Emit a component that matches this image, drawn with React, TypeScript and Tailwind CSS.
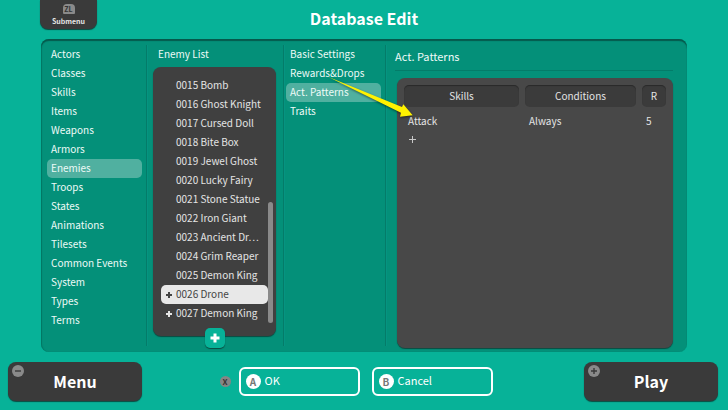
import React, { useState } from "react";

const sections = [
  "Actors", "Classes", "Skills", "Items", "Weapons", "Armors", "Enemies", "Troops",
  "States", "Animations", "Tilesets", "Common Events", "System", "Types", "Terms",
];

const enemies = [
  { id: "0015", name: "Bomb" },
  { id: "0016", name: "Ghost Knight" },
  { id: "0017", name: "Cursed Doll" },
  { id: "0018", name: "Bite Box" },
  { id: "0019", name: "Jewel Ghost" },
  { id: "0020", name: "Lucky Fairy" },
  { id: "0021", name: "Stone Statue" },
  { id: "0022", name: "Iron Giant" },
  { id: "0023", name: "Ancient Dr⋯" },
  { id: "0024", name: "Grim Reaper" },
  { id: "0025", name: "Demon King" },
  { id: "0026", name: "Drone", added: true },
  { id: "0027", name: "Demon King", added: true },
];

const pages = ["Basic Settings", "Rewards&Drops", "Act. Patterns", "Traits"];

const patterns = [{ skill: "Attack", condition: "Always", rating: 5 }];

function PlusGlyph({ className }: { className: string }) {
  return (
    <svg viewBox="0 0 8 8" className={className} aria-hidden="true">
      <path d="M4 1v6M1 4h6" stroke="currentColor" strokeWidth="2" fill="none" />
    </svg>
  );
}

function MenuList({ label, items, current, onPick }: {
  label: string;
  items: string[];
  current: string;
  onPick: (item: string) => void;
}) {
  return (
    <nav aria-label={label}>
      <ul>
        {items.map((item) => (
          <li key={item}>
            <button
              type="button"
              onClick={() => onPick(item)}
              aria-current={item === current ? "page" : undefined}
              className={
                item === current
                  ? "block h-[19px] w-full rounded-[5px] bg-[#50b0a0] px-1 pb-0.5 text-left leading-[17px] whitespace-nowrap"
                  : "block h-[19px] w-full px-1 pb-0.5 text-left leading-[17px] whitespace-nowrap"
              }
            >
              {item}
            </button>
          </li>
        ))}
      </ul>
    </nav>
  );
}

function Divider() {
  return <div className="my-1.5 w-0.5 shrink-0 border-l border-[#047c69] bg-[#069481]" />;
}

function CornerButton({ label, children }: { label: string; children: React.ReactNode }) {
  return (
    <button
      type="button"
      className="relative h-[39px] w-[134px] rounded-lg bg-[#3a3a3a] pb-0.5 text-base font-bold text-white shadow-[0_1px_1px_#0b4a40]"
    >
      <svg viewBox="0 0 12 12" className="absolute top-[3px] left-1 size-3" aria-hidden="true">
        <circle cx="6" cy="6" r="6" fill="#8a8a8a" />
        {children}
      </svg>
      {label}
    </button>
  );
}

function ActionButton({ badge, label }: { badge: string; label: string }) {
  return (
    <button
      type="button"
      className="flex h-[29px] w-[121px] items-center gap-1 rounded-md border-2 border-white px-[5px] text-[11px] text-white"
    >
      <span className="flex size-[15px] items-center justify-center rounded-full bg-white text-[10px] leading-none font-bold text-[#777]">
        {badge}
      </span>
      <span className="pb-0.5">{label}</span>
    </button>
  );
}

export default function App() {
  const [section, setSection] = useState("Enemies");
  const [page, setPage] = useState("Act. Patterns");
  const [enemy, setEnemy] = useState("0026");

  return (
    <div className="flex min-h-screen flex-col bg-[#07b298] font-['Noto_Sans_CJK_JP','Noto_Sans',sans-serif] text-[10px] leading-[19px] font-normal text-[#eefaf7]">
      <header className="grid grid-cols-[1fr_auto_1fr] items-start px-10">
        <button
          type="button"
          className="flex h-[29px] w-[57px] flex-col items-center rounded-b-lg bg-[#3a3a3a] pt-1 text-[7px] leading-[14px] font-bold text-[#e4e4e4] shadow-[0_1px_1px_#0b4a40]"
        >
          <span className="flex h-2.5 w-3 items-center justify-center rounded-t-sm rounded-b-[1px] bg-[#8a8a8a] text-[7px] leading-none text-[#333]">
            ZL
          </span>
          Submenu
        </button>
        <h1 className="pt-2 text-base leading-5 font-bold text-white">Database Edit</h1>
      </header>

      <main className="relative mx-[41px] mt-2.5 flex rounded-lg bg-[#049079] shadow-[inset_0_2px_1px_#05594c,inset_1px_0_1px_#047a67]">
        <section className="w-[105px] shrink-0 pt-1.5 pr-1 pl-1.5">
          <MenuList label="Database" items={sections} current={section} onPick={setSection} />
        </section>
        <Divider />

        <section className="flex w-[135px] shrink-0 flex-col pt-1.5 pr-[7px] pb-1 pl-[5px]">
          <h2 className="h-[19px] px-[5px] leading-[17px]">Enemy List</h2>
          <div className="mt-[3px] flex rounded-lg bg-[#404040] pt-[9px] pr-[3px] pb-[13px] pl-2 text-[#e4e4e4] shadow-[0_1px_1px_#0b4a40]">
            <ul className="grow">
              {enemies.map((e) => (
                <li key={e.id}>
                  <button
                    type="button"
                    onClick={() => setEnemy(e.id)}
                    className={
                      e.id === enemy
                        ? "flex h-[19px] w-full items-center rounded-[5px] bg-[#e8e8e8] whitespace-nowrap text-[#444]"
                        : "flex h-[19px] w-full items-center whitespace-nowrap"
                    }
                  >
                    <span className="flex w-[15px] shrink-0 justify-center">
                      {e.added && <PlusGlyph className="size-2" />}
                    </span>
                    <span className="h-[19px] leading-[17px]">
                      {e.id} {e.name}
                    </span>
                  </button>
                </li>
              ))}
            </ul>
            <div className="flex w-[5px] shrink-0 flex-col justify-end">
              <div className="h-[49%] rounded-full bg-[#8a8a8a]" />
            </div>
          </div>
          <button
            type="button"
            aria-label="Add enemy"
            className="relative -mt-2 flex size-5 items-center justify-center self-center rounded-[5px] bg-[#07b298] text-white shadow-[0_1px_1px_#0b4a40]"
          >
            <PlusGlyph className="size-3" />
          </button>
        </section>
        <Divider />

        <section className="w-[100px] shrink-0 pt-1.5 pr-1 pl-px">
          <MenuList label="Enemy settings" items={pages} current={page} onPick={setPage} />
        </section>
        <Divider />

        <section className="flex min-w-0 grow flex-col pt-2 pr-3.5 pb-1 pl-2">
          <h2 className="border-b border-[#047c69] pb-1 text-[11px]">Act. Patterns</h2>
          <div className="mt-[7px] ml-0.5 grow rounded-lg bg-[#484848] px-px pt-[7px] text-[#e4e4e4] shadow-[0_1px_1px_#0b4a40]">
            <table className="w-full table-fixed border-separate border-spacing-x-1.5 border-spacing-y-0">
              <colgroup>
                <col className="w-[115px]" />
                <col />
                <col className="w-6" />
              </colgroup>
              <thead>
                <tr>
                  {["Skills", "Conditions", "R"].map((h) => (
                    <th
                      key={h}
                      scope="col"
                      className="h-[22px] rounded-[5px] bg-[#3b3b3b] p-0 pb-0.5 font-normal shadow-[inset_0_1px_1px_#2a2a2a]"
                    >
                      {h}
                    </th>
                  ))}
                </tr>
              </thead>
              <tbody>
                <tr aria-hidden="true">
                  <td className="h-1 p-0" />
                </tr>
                {patterns.map((p) => (
                  <tr key={p.skill}>
                    <td className="p-0 pl-1">{p.skill}</td>
                    <td className="p-0 pl-1">{p.condition}</td>
                    <td className="p-0 pl-1">{p.rating}</td>
                  </tr>
                ))}
                <tr>
                  <td className="p-0 pl-1">
                    <button type="button" aria-label="Add pattern" className="flex h-[19px] items-center">
                      <svg viewBox="0 0 9 9" className="size-[9px]" aria-hidden="true">
                        <path d="M4.5 1v7M1 4.5h7" stroke="#c8c8c8" fill="none" />
                      </svg>
                    </button>
                  </td>
                </tr>
              </tbody>
            </table>
          </div>
        </section>

        <svg
          viewBox="0 0 90 46"
          className="pointer-events-none absolute top-9 left-[285px] h-[46px] w-[90px] drop-shadow-[0_1px_1px_rgba(0,0,0,0.5)]"
          aria-hidden="true"
        >
          <path d="M2.5 2 L76 32 L77.3 29.3 L86.7 40.3 L74 41.7 L75 37.7 Z" fill="#fff200" />
        </svg>
      </main>

      <footer className="mt-2.5 flex items-center justify-between pr-2.5 pb-[9px] pl-2">
        <CornerButton label="Menu">
          <path d="M3 6h6" stroke="#3a3a3a" strokeWidth="1.4" />
        </CornerButton>
        <div className="flex items-center pr-3.5">
          <span className="mr-2 flex size-[11px] items-center justify-center rounded-full bg-[#858585] text-[8px] leading-none font-bold text-[#333]">
            X
          </span>
          <div className="flex gap-3">
            <ActionButton badge="A" label="OK" />
            <ActionButton badge="B" label="Cancel" />
          </div>
        </div>
        <CornerButton label="Play">
          <path d="M3 6h6M6 3v6" stroke="#3a3a3a" strokeWidth="1.4" />
        </CornerButton>
      </footer>
    </div>
  );
}
